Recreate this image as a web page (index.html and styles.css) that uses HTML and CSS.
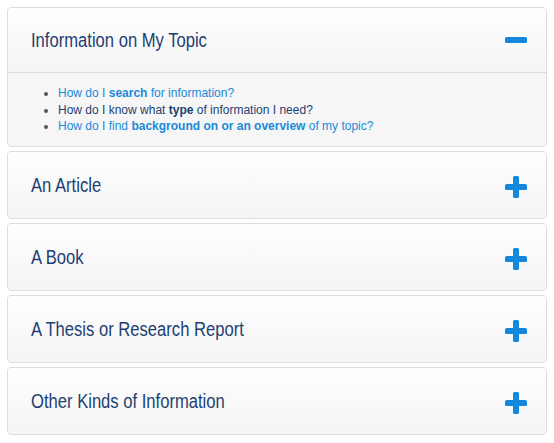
FILE: index.html
```html
<!DOCTYPE html>
<html lang="en">
<head>
    <meta charset="UTF-8">
    <meta name="viewport" content="width=device-width, initial-scale=1.0">
    <title>Find Information</title>
    <link rel="stylesheet" href="styles.css">
</head>
<body>
    <div class="accordion">
        <div class="panel open">
            <div class="panel-heading">
                <h2>Information on My Topic</h2>
                <svg class="toggle" width="22" height="22" viewBox="0 0 22 22"><rect x="0" y="8" width="22" height="6" rx="1.5"/></svg>
            </div>
            <div class="panel-body">
                <ul>
                    <li><a href="#">How do I <b>search</b> for information?</a></li>
                    <li>How do I know what <b>type</b> of information I need?</li>
                    <li><a href="#">How do I find <b>background on or an overview</b> of my topic?</a></li>
                </ul>
            </div>
        </div>

        <div class="panel">
            <div class="panel-heading">
                <h2>An Article</h2>
                <svg class="toggle plus" width="22" height="22" viewBox="0 0 22 22"><rect x="0" y="8" width="22" height="6" rx="1.5"/><rect x="8" y="0" width="6" height="22" rx="1.5"/></svg>
            </div>
        </div>

        <div class="panel">
            <div class="panel-heading">
                <h2>A Book</h2>
                <svg class="toggle plus" width="22" height="22" viewBox="0 0 22 22"><rect x="0" y="8" width="22" height="6" rx="1.5"/><rect x="8" y="0" width="6" height="22" rx="1.5"/></svg>
            </div>
        </div>

        <div class="panel">
            <div class="panel-heading">
                <h2>A Thesis or Research Report</h2>
                <svg class="toggle plus" width="22" height="22" viewBox="0 0 22 22"><rect x="0" y="8" width="22" height="6" rx="1.5"/><rect x="8" y="0" width="6" height="22" rx="1.5"/></svg>
            </div>
        </div>

        <div class="panel">
            <div class="panel-heading">
                <h2>Other Kinds of Information</h2>
                <svg class="toggle plus" width="22" height="22" viewBox="0 0 22 22"><rect x="0" y="8" width="22" height="6" rx="1.5"/><rect x="8" y="0" width="6" height="22" rx="1.5"/></svg>
            </div>
        </div>
    </div>
</body>
</html>
```

FILE: styles.css
```css
body {
    margin: 0;
    padding: 7px;
    background: #fff;
    font-family: "Liberation Sans", Arial, sans-serif;
}
.accordion {
    display: flex;
    flex-direction: column;
    gap: 4px;
}
.panel {
    border: 1px solid #dcdcdc;
    border-radius: 4px;
    background: #f6f6f6;
    overflow: hidden;
}
.panel-heading {
    height: 66px;
    display: flex;
    align-items: center;
    justify-content: space-between;
    padding: 0 19px 0 23px;
    background: linear-gradient(#fefefe, #f5f5f6);
}
.panel.open .panel-heading {
    height: 64px;
    border-bottom: 1px solid #dcdcdc;
}
/* headings use a condensed face; none installed, so squeeze Liberation Sans */
h2 {
    margin: 0;
    font-family: "Liberation Sans", Arial, sans-serif;
    font-weight: normal;
    font-size: 20px;
    color: #1d3f72;
    transform: scaleX(0.83);
    transform-origin: left center;
    white-space: nowrap;
}
.toggle {
    fill: #1488dd;
    flex-shrink: 0;
}
.toggle.plus {
    margin-top: 4px;
}
.panel-body {
    padding: 12px 0 11.5px 50px;
    font-size: 12px;
    color: #1d3f72;
}
ul {
    margin: 0;
    padding: 0;
    list-style: disc;
}
li {
    line-height: 16.5px;
}
li::marker {
    color: #555;
}
a {
    color: #1a8ad8;
    text-decoration: none;
}
```
